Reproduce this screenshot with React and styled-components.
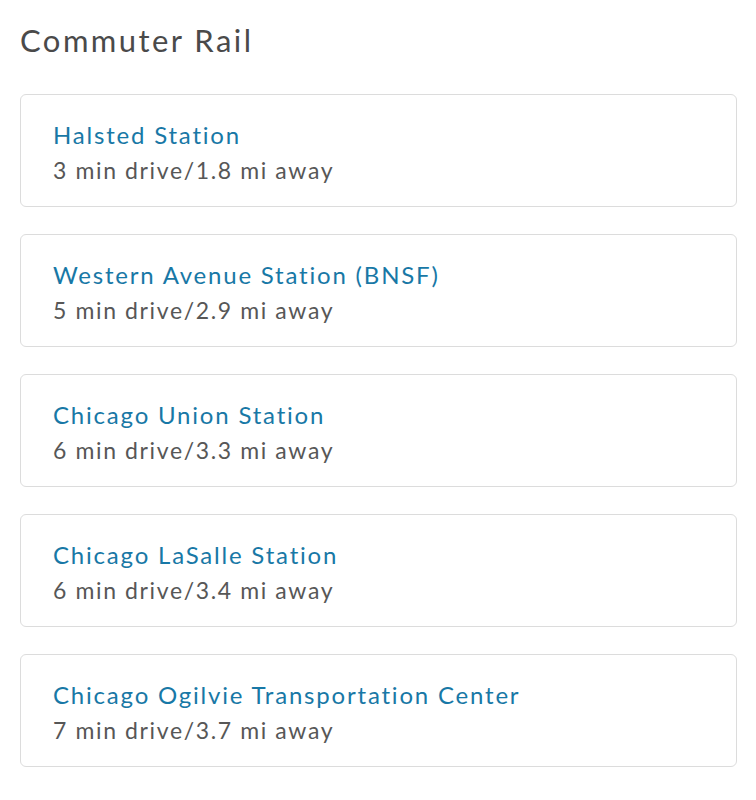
import React from 'react';
import styled, { createGlobalStyle } from 'styled-components';

const GlobalStyle = createGlobalStyle`
    html, body {
        margin: 0;
        padding: 0;
        background: #ffffff;
    }
`;

const Page = styled.div`
    font-family: Lato, 'Open Sans', sans-serif;
    padding: 20px 19px 20px 20px;
`;

const Heading = styled.h2`
    margin: 0 0 34px 0;
    font-size: 31px;
    font-weight: 400;
    line-height: 40px;
    color: #4a4a4a;
    letter-spacing: 2.45px;
`;

const List = styled.div`
    display: flex;
    flex-direction: column;
    gap: 27px;
`;

const Card = styled.div`
    border: 1.5px solid #dcdcdc;
    border-radius: 6px;
    padding: 23px 32px 20px 32px;
    display: flex;
    flex-direction: column;
    gap: 3px;
`;

const Name = styled.div`
    font-size: 24px;
    line-height: 33px;
    color: #1878a6;
    letter-spacing: 1.8px;
`;

const Distance = styled.div`
    font-size: 23px;
    line-height: 32px;
    color: #575757;
    letter-spacing: 1.62px;
`;

const stations = [
    { name: 'Halsted Station', time: 3, miles: '1.8' },
    { name: 'Western Avenue Station (BNSF)', time: 5, miles: '2.9' },
    { name: 'Chicago Union Station', time: 6, miles: '3.3' },
    { name: 'Chicago LaSalle Station', time: 6, miles: '3.4' },
    { name: 'Chicago Ogilvie Transportation Center', time: 7, miles: '3.7' },
];

function App() {
    return (
        <Page>
            <GlobalStyle />
            <Heading>Commuter Rail</Heading>
            <List>
                {stations.map((item) => (
                    <Card key={item.name}>
                        <Name>{item.name}</Name>
                        <Distance>
                            {item.time} min drive/{item.miles} mi away
                        </Distance>
                    </Card>
                ))}
            </List>
        </Page>
    );
}

export default App;
